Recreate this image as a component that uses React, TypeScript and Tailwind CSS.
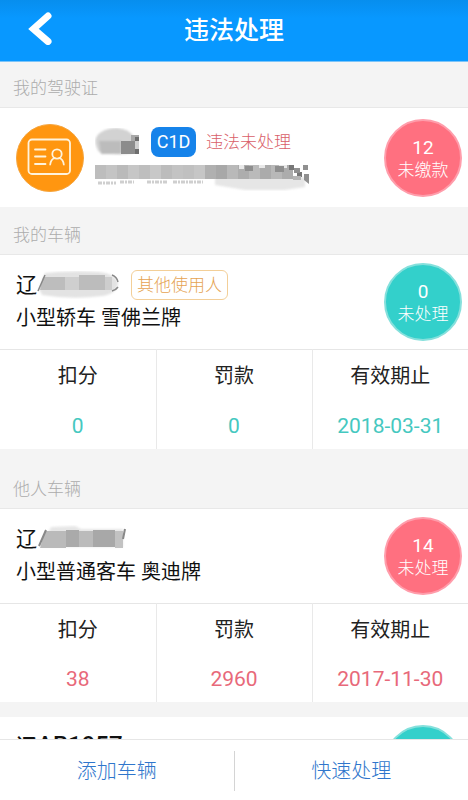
import React from "react";

type Tone = "red" | "teal";

const toneText = {
  red: "text-[#e8697a]",
  teal: "text-[#45c8c0]",
};

const toneBadge = {
  red: "bg-[#ff7080] border-[#ff9dab]",
  teal: "bg-[#33d0cb] border-[#85e0dc]",
};

const vehicles = [
  {
    group: "我的车辆",
    model: "小型轿车 雪佛兰牌",
    tag: "其他使用人",
    count: 0,
    tone: "teal" as Tone,
    points: "0",
    fine: "0",
    validUntil: "2018-03-31",
  },
  {
    group: "他人车辆",
    model: "小型普通客车 奥迪牌",
    tag: "",
    count: 14,
    tone: "red" as Tone,
    points: "38",
    fine: "2960",
    validUntil: "2017-11-30",
  },
];

function SectionTitle({ children, className = "h-[47px]" }: any) {
  return (
    <h2
      className={`${className} shrink-0 flex items-end px-[13px] pb-[7px] border-b border-[#e8e8e8] bg-[#f4f4f4] text-[17px] leading-6 font-light text-[#acacac]`}
    >
      {children}
    </h2>
  );
}

function StatusBadge({ count, label, tone }: { count: number; label: string; tone: Tone }) {
  return (
    <button
      type="button"
      className={`size-[78px] shrink-0 rounded-full border-2 pt-[2px] flex flex-col items-center justify-center text-white leading-[22px] ${toneBadge[tone]}`}
    >
      <span className="text-[19px]">{count}</span>
      <span className="text-[17px] font-light">{label}</span>
    </button>
  );
}

function LicenseIcon() {
  return (
    <svg viewBox="0 0 68 68" className="size-[68px] shrink-0" fill="none" stroke="#fff3dc" strokeWidth="1.8" strokeLinecap="round">
      <circle cx="34" cy="34" r="33.5" fill="#ff9610" stroke="#f5a53f" strokeWidth="1" />
      <rect x="12.5" y="15.5" width="41.5" height="34.500" rx="3.5" />
      <path d="M19 25.500h10.500M19 32.500h10.500M19 40h10.500" />
      <circle cx="41" cy="30" r="4.700" />
      <path d="M34.200 40.500c.4-3.400 2.300-5.800 4.500-6.500M43.300 34c2.200.7 4.100 3.100 4.500 6.500" />
    </svg>
  );
}

// Grey blocks that hide private text
function NameMask() {
  return (
    <svg viewBox="0 0 44 28" className="w-11 h-7" aria-hidden="true">
      <g className="blur-[1px]">
        <path d="M2 8Q8 0 22 0Q34 1 38 8V25Q20 28 4 24Q-2 14 2 8Z" fill="#d2d2d2" />
        <path d="M4 13h22v13H6z" fill="#bcbcbc" />
      </g>
      <path d="M26 13h14v13H26z" fill="#8c8c8c" />
      <path d="M36 7h8v6h-8z" fill="#a8a8a8" />
      <path d="M40 9h4v4h-4zM40 21h4v5h-4z" fill="#6e6e6e" />
      <path d="M40 13h4v8h-4z" fill="#d0d0d0" />
    </svg>
  );
}

const numberShades = ["#bdbdbd", "#c4c4c4", "#bababa", "#c6c6c6", "#bebebe", "#c8c8c8", "#bcbcbc", "#c3c3c3", "#c0c0c0", "#c6c6c6", "#b0b0b0", "#a8a8a8", "#b9b9b9", "#adadad", "#bababa", "#ababab", "#b8b8b8", "#acacac"];

function NumberMask() {
  return (
    <svg viewBox="0 0 214 28" className="mt-[6px] w-[214px] h-7" aria-hidden="true">
      <path d="M120 14h90v10l-20 3h-40l-30-5z" fill="#e6e6e6" className="blur-[1px]" />
      {numberShades.map((shade, i) => (
        <rect key={i} x={i * 11} y="2" width="11" height="14" fill={shade} />
      ))}
      <path d="M3 20h18M25 19h14M52 19h20M78 19h30" stroke="#cfcfcf" strokeWidth="3" strokeDasharray="4 1 2 1" />
      <path d="M144 2h5v4h-5zM164 2h6v3h-6zM184 2h8v3h-8z" fill="#e8e8e8" />
      <path d="M150 3h8v5h-8zM180 3h9v6h-9z" fill="#8e8e8e" />
      <path d="M194 2h5v5h-5zM202 9h5v5h-5z" fill="#777777" />
      <path d="M199 5h6v5h-6zM208 2h5v5h-5zM209 11h5v10l-5-4z" fill="#909090" />
      <path d="M198 13h8v4h-8z" fill="#b5b5b5" />
    </svg>
  );
}

function PlateMask({ kind }: { kind: Tone }) {
  if (kind === "teal") {
    return (
      <svg viewBox="0 0 84 28" className="w-[84px] h-[28px]" aria-hidden="true">
        <path d="M8 2Q35-1 62 1Q80 3 81 13Q79 23 65 25Q35 29 5 24L2 18Z" fill="#e3e3e3" className="blur-[1px]" />
        <path d="M6 6h22v13H3z" fill="#bdbdbd" />
        <path d="M28 6h14v13H28z" fill="#cfcfcf" />
        <path d="M42 4h26v15H42z" fill="#bcbcbc" />
        <path d="M68 6h7v13h-7z" fill="#cdcdcd" />
        <path d="M8 4L1 20M75 4q5 2 6 7M75 20q4-1 6-4" stroke="#888" strokeWidth="1.500" fill="none" />
      </svg>
    );
  }
  return (
    <svg viewBox="0 0 90 28" className="w-[90px] h-[28px]" aria-hidden="true">
      <path d="M14 2l24-1 6 3h42v18H4z" fill="#e6e6e6" className="blur-[1px]" />
      <path d="M8 6h21v17H3z" fill="#bababa" />
      <path d="M29 5h13v17H29z" fill="#aaaaaa" />
      <path d="M42 6h14v16H42z" fill="#bbbbbb" />
      <path d="M56 5h22v17H56z" fill="#a8a8a8" />
      <path d="M78 6h8v17h-8z" fill="#c2c2c2" />
      <path d="M9 5L2 21M88 4l-2 10" stroke="#888" strokeWidth="2" fill="none" />
    </svg>
  );
}

function VehicleStats({ car }: any) {
  return (
    <table className="w-full table-fixed text-center border-t border-[#e6e6e6]">
      <thead>
        <tr className="h-[53px] text-xl leading-6 text-[#222] divide-x divide-[#e9e9e9]">
          <th className="font-normal">扣分</th>
          <th className="font-normal">罚款</th>
          <th className="font-normal">有效期止</th>
        </tr>
      </thead>
      <tbody>
        <tr className={`h-[46px] text-[21px] leading-6 divide-x divide-[#e9e9e9] ${toneText[car.tone as Tone]}`}>
          <td>{car.points}</td>
          <td>{car.fine}</td>
          <td>{car.validUntil}</td>
        </tr>
      </tbody>
    </table>
  );
}

export default function App() {
  return (
    <div className="h-dvh flex flex-col bg-[#f4f4f4] font-[Roboto,'Noto_Sans_CJK_SC',sans-serif] text-[#111]">
      <header className="h-[62px] shrink-0 grid grid-cols-[80px_1fr_80px] items-center bg-linear-to-b from-[#078eee] to-[#0898ff] to-30% border-b border-[#7cc4f8] text-white">
        <button type="button" aria-label="返回" className="pl-7 pb-[5px]">
          <svg viewBox="0 0 24 34" className="w-6 h-[34px]" fill="none" stroke="currentColor" strokeWidth="7" strokeLinecap="round" strokeLinejoin="miter">
            <path d="M20 5L5.500 18L20 30.500" />
          </svg>
        </button>
        <h1 className="text-center text-[25px] leading-8 font-medium">违法处理</h1>
      </header>

      <main className="flex-1 min-h-0 overflow-hidden">
        <SectionTitle className="h-[46px]">我的驾驶证</SectionTitle>
        <section className="h-[99px] bg-white flex items-center pl-4 pr-[6px]">
          <LicenseIcon />
          <div className="flex-1 min-w-0 pt-[2px] pl-[11px]">
            <div className="flex items-center">
              <NameMask />
              <span className="ml-3 h-[30px] w-[45px] rounded-lg bg-[#1683ea] text-white text-lg leading-[30px] text-center">C1D</span>
              <span className="ml-[10px] text-[17px] leading-6 font-light text-[#d96068]">违法未处理</span>
            </div>
            <NumberMask />
          </div>
          <StatusBadge count={12} label="未缴款" tone="red" />
        </section>

        {vehicles.map((car, i) => (
          <React.Fragment key={car.group}>
            <SectionTitle className={i === 0 ? "h-12" : "h-[60px]"}>{car.group}</SectionTitle>
            <section className="bg-white">
              <div className="h-[94px] flex items-center pl-4 pr-[6px]">
                <div className="flex-1 min-w-0 pb-[2px]">
                  <div className="h-[34px] flex items-center text-[21px] leading-8">
                    <span>辽</span>
                    <PlateMask kind={car.tone} />
                    {car.tag && (
                      <span className="ml-[10px] px-[5px] rounded-md border border-[#f3cf98] text-[17px] leading-7 font-light text-[#e5a352]">
                        {car.tag}
                      </span>
                    )}
                  </div>
                  <p className="text-xl leading-8">{car.model}</p>
                </div>
                <StatusBadge count={car.count} label="未处理" tone={car.tone} />
              </div>
              <VehicleStats car={car} />
            </section>
          </React.Fragment>
        ))}

        <section className="mt-[15px] h-[94px] bg-white flex items-start pt-2 pl-4 pr-[6px]">
          <p className="flex-1 min-w-0 pt-1 text-[21px] leading-8 font-medium">
            辽<span className="text-2xl leading-8">AB1957</span>
          </p>
          <StatusBadge count={0} label="未处理" tone="teal" />
        </section>
      </main>

      <footer className="h-[61px] pt-[2px] shrink-0 flex items-center bg-white border-t border-[#e6e6e6] text-xl leading-10 font-light text-[#2f76cc]">
        <button type="button" className="flex-1 border-r border-[#d4d4d4]">添加车辆</button>
        <button type="button" className="flex-1">快速处理</button>
      </footer>
    </div>
  );
}
